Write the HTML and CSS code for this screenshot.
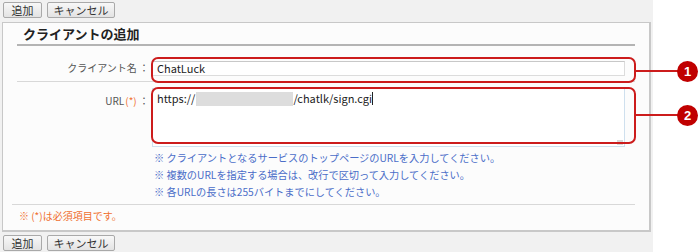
FILE: index.html
```html
<!DOCTYPE html>
<html lang="ja">
<head>
<meta charset="utf-8">
<link rel="stylesheet" href="styles.css">
</head>
<body>
<div class="page">
  <div class="toolbar">
    <button class="btn">追加</button>
    <button class="btn">キャンセル</button>
  </div>
  <div class="panel">
    <h2 class="title">クライアントの追加</h2>
    <div class="row row-name">
      <div class="label">クライアント名 ：</div>
      <div class="field"><div class="input">ChatLuck</div></div>
    </div>
    <div class="row row-url">
      <div class="label">URL<span class="req">(*)</span> ：</div>
      <div class="field">
        <div class="textarea">https://<span class="mask"></span>/chatlk/sign.cgi<span class="caret"></span><span class="grip"></span></div>
        <ul class="notes">
          <li>※ クライアントとなるサービスのトップページのURLを入力してください。</li>
          <li>※ 複数のURLを指定する場合は、改行で区切って入力してください。</li>
          <li>※ 各URLの長さは255バイトまでにしてください。</li>
        </ul>
      </div>
    </div>
    <div class="footnote">※ (*)は必須項目です。</div>
  </div>
  <div class="toolbar bottom">
    <button class="btn">追加</button>
    <button class="btn">キャンセル</button>
  </div>
  <div class="callout c1"></div>
  <div class="callout c2"></div>
  <div class="leader l1"></div>
  <div class="leader l2"></div>
  <div class="badge b1">1</div>
  <div class="badge b2">2</div>
</div>
</body>
</html>
```

FILE: styles.css
```css
* { box-sizing: border-box; }
html, body { margin: 0; padding: 0; background: #fff; }
body { font-family: "Noto Sans CJK JP", "Noto Sans", sans-serif; font-size: 10px; color: #333; }
.page { position: relative; width: 653px; height: 252px; background: #f1f1f1; }
.toolbar { height: 22px; padding: 2px 3px 0; display: flex; gap: 5px; align-items: flex-start; }
.toolbar.bottom { height: 21px; padding-top: 3px; }
.btn {
  font-family: inherit; font-size: 11px; line-height: 13px; color: #333;
  height: 16px; padding: 0; margin: 0;
  border: 1px solid #a9a9a9; border-radius: 2px;
  background: linear-gradient(#f8f8f8, #e3e3e3);
}
.toolbar .btn:first-child { width: 39px; }
.toolbar .btn:nth-child(2) { width: 68px; }
.panel {
  margin: 0 2px; width: 649px; height: 210px;
  background: #fcfcfc; border: 1px solid #c8c8c8; border-right-width: 2px; border-bottom-width: 2px;
  padding: 0 14px 0 14px;
}
.title {
  margin: 0; font-size: 13px; font-weight: bold; color: #222;
  height: 23px; line-height: 20px; padding: 1px 0 0 6px;
  border-bottom: 2px solid #b4b4b4;
}
.row { display: grid; grid-template-columns: 135px 1fr; }
.label { text-align: right; color: #555; padding-right: 3px; }
.row-name { height: 36px; padding-top: 15px; border-bottom: 1px solid #d8d8d8; }
.row-name .label { line-height: 14px; }
.input {
  width: 473px; height: 15px; border: 1px solid #dcdcdc; border-top-color: #c8c8c8;
  background: #fff; padding: 0 0 0 4px; font-size: 11px; line-height: 13px; color: #222;
}
.row-url { padding-top: 6px; }
.row-url .label { padding-top: 6px; line-height: 14px; }
.req { color: #f07030; margin-left: 1px; }
.textarea {
  position: relative; width: 473px; height: 59px; background: #fff;
  border: 1px solid #cfe0ee; padding: 2px 4px; font-size: 11px; line-height: 14px; color: #222;
}
.mask { display: inline-block; width: 97px; height: 14px; background: #dddddd; vertical-align: top; margin: 1px 0 0 1px; }
.caret { display: inline-block; width: 1px; height: 13px; background: #222; vertical-align: top; margin-top: 1px; }
.grip { position: absolute; right: 1px; bottom: 1px; width: 6px; height: 5px;
  background: radial-gradient(circle, #aaa 0.6px, transparent 0.8px) 0 0 / 2px 2px; }
.notes { list-style: none; margin: 0; padding: 2px 0 0 2px; color: #4a6dc8; font-size: 10.2px; line-height: 17px; height: 58px;
  border-bottom: 1px solid #d8d8d8; margin-left: -140px; padding-left: 142px; }
.footnote { color: #f07030; line-height: 22px; padding-left: 2px; }
.callout { position: absolute; left: 151px; width: 485px; border: 2px solid #cc1c1c; border-radius: 7px; }
.c1 { top: 57px; height: 26px; }
.c2 { top: 87px; height: 57px; }
.leader { position: absolute; left: 636px; width: 44px; height: 2px; background: #cc1c1c; }
.l1 { top: 70px; }
.l2 { top: 114px; }
.badge {
  position: absolute; left: 677px; width: 21px; height: 21px; border-radius: 50%;
  background: #c00000; color: #fff; font-family: "Liberation Sans", sans-serif; font-weight: bold;
  font-size: 13px; line-height: 21px; text-align: center;
}
.b1 { top: 61px; }
.b2 { top: 105px; }
```
